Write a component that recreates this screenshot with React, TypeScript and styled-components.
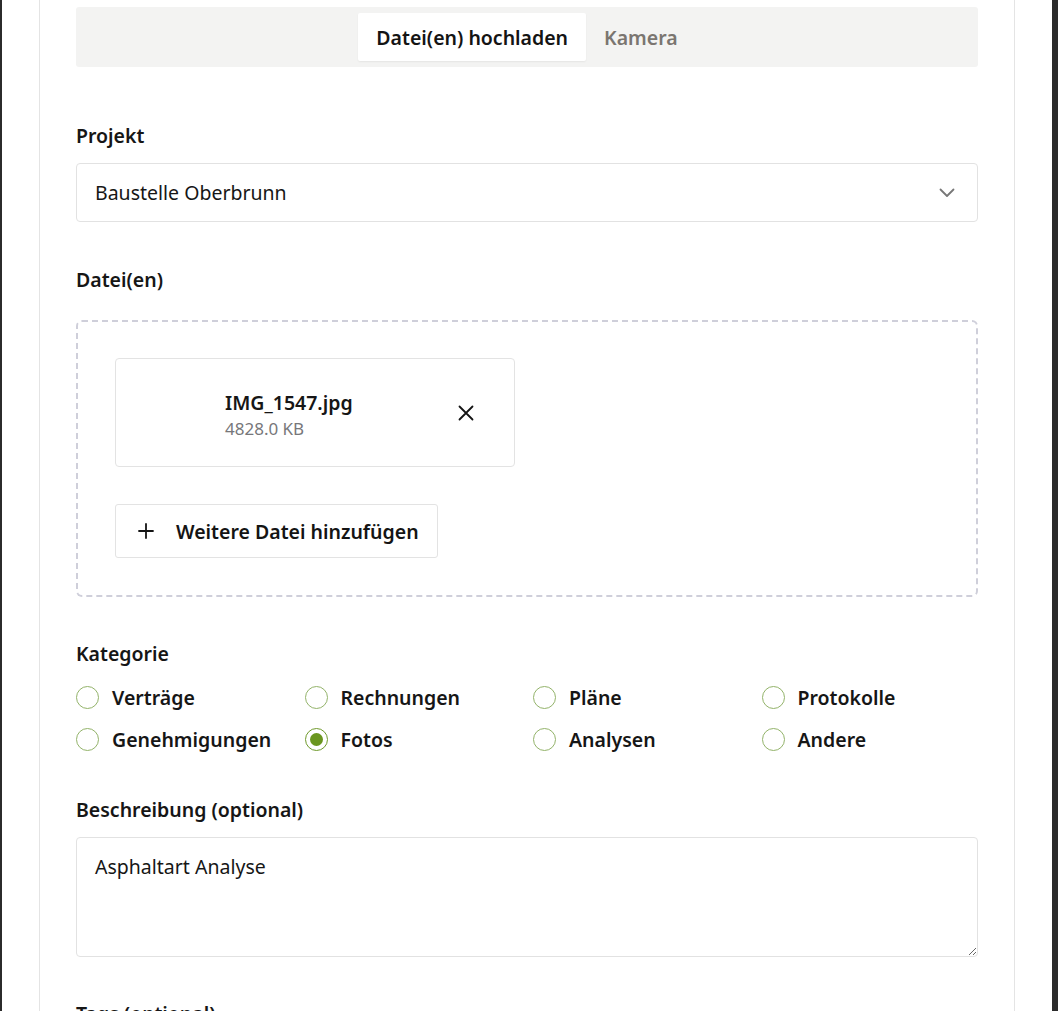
import React, { useState } from "react";
import styled, { createGlobalStyle } from "styled-components";

const GlobalStyle = createGlobalStyle`
  html, body { margin: 0; padding: 0; background: #ffffff; }
  body {
    font-family: "Noto Sans", "Open Sans", sans-serif;
    color: #161616;
    -webkit-font-smoothing: antialiased;
  }
  * { box-sizing: border-box; }
`;

const Frame = styled.div`
  min-height: 100vh;
  border-left: 2px solid #2b2b2b;
  border-right: 6px solid #2b2b2b;
  display: flex;
  justify-content: center;
`;

const Card = styled.main`
  width: 976px;
  border-left: 1px solid #e4e4e4;
  border-right: 1px solid #e4e4e4;
  padding: 7px 36px 40px;
  display: flex;
  flex-direction: column;
`;

const TabBar = styled.div`
  height: 60px;
  background: #f3f3f2;
  border-radius: 3px;
  padding: 6px;
  display: flex;
  justify-content: center;
`;

const Tab = styled.button<{ $active?: boolean }>`
  height: 48px;
  padding: 0 18px;
  border: none;
  border-radius: 2px;
  font-family: inherit;
  font-size: 19.5px;
  font-weight: 600;
  cursor: pointer;
  background: ${(p) => (p.$active ? "#ffffff" : "transparent")};
  color: ${(p) => (p.$active ? "#141414" : "#7a7570")};
  box-shadow: ${(p) => (p.$active ? "0 1px 2px rgba(0,0,0,0.06)" : "none")};
`;

const Field = styled.section<{ $top: number }>`
  margin-top: ${(p) => p.$top}px;
  display: flex;
  flex-direction: column;
`;

const Label = styled.div<{ $gap?: number }>`
  font-size: 19.5px;
  font-weight: 600;
  line-height: 26px;
  margin-bottom: ${(p) => p.$gap ?? 14}px;
`;

const SelectBox = styled.div`
  height: 59px;
  border: 1px solid #e2e2e2;
  border-radius: 4px;
  padding: 0 22px 0 18px;
  display: flex;
  align-items: center;
  justify-content: space-between;
  font-size: 19.5px;
`;

const DropZone = styled.div`
  border: 2px dashed #cfcfda;
  border-radius: 6px;
  padding: 36px 37px 37px;
  display: flex;
  flex-direction: column;
  align-items: flex-start;
  gap: 37px;
`;

const FileCard = styled.div`
  width: 400px;
  height: 109px;
  border: 1px solid #e3e3e3;
  border-radius: 4px;
  padding: 0 32px 0 16px;
  display: flex;
  align-items: center;
  gap: 13px;
`;

const Thumb = styled.div`
  width: 80px;
  height: 80px;
`;

const FileInfo = styled.div`
  flex: 1;
  display: flex;
  flex-direction: column;
  padding-top: 4px;
`;

const FileName = styled.div`
  font-size: 19.5px;
  font-weight: 600;
  line-height: 26px;
`;

const FileSize = styled.div`
  font-size: 17px;
  color: #77777a;
  line-height: 22px;
  margin-top: 2px;
`;

const IconButton = styled.button`
  width: 32px;
  height: 32px;
  border: none;
  background: transparent;
  padding: 0;
  display: flex;
  align-items: center;
  justify-content: center;
  cursor: pointer;
  color: #141414;
`;

const AddButton = styled.button`
  height: 54px;
  padding: 0 18px 0 22px;
  border: 1px solid #e3e3e3;
  border-radius: 3px;
  background: #ffffff;
  display: flex;
  align-items: center;
  gap: 22px;
  font-family: inherit;
  font-size: 19.5px;
  font-weight: 600;
  color: #141414;
  cursor: pointer;
`;

const RadioGrid = styled.div`
  display: grid;
  grid-template-columns: repeat(4, 1fr);
  column-gap: 12px;
  row-gap: 14px;
`;

const RadioItem = styled.label`
  display: flex;
  align-items: center;
  gap: 13px;
  height: 28px;
  font-size: 19.5px;
  font-weight: 600;
  cursor: pointer;
`;

const RadioCircle = styled.span<{ $checked?: boolean }>`
  width: 23px;
  height: 23px;
  border-radius: 50%;
  border: 1.5px solid ${(p) => (p.$checked ? "#6f9a2c" : "#93b36a")};
  display: flex;
  align-items: center;
  justify-content: center;
  flex-shrink: 0;
  &::after {
    content: "";
    width: 13px;
    height: 13px;
    border-radius: 50%;
    background: #6a961f;
    display: ${(p) => (p.$checked ? "block" : "none")};
  }
`;

const TextArea = styled.textarea`
  height: 120px;
  border: 1px solid #e2e2e2;
  border-radius: 4px;
  padding: 16px 18px;
  font-family: inherit;
  font-size: 19.5px;
  line-height: 26px;
  color: #161616;
  resize: vertical;
  outline: none;
`;

const TextInput = styled.input`
  height: 59px;
  border: 1px solid #e2e2e2;
  border-radius: 4px;
  padding: 0 18px;
  font-family: inherit;
  font-size: 19.5px;
  outline: none;
`;

const categories = [
  "Verträge",
  "Rechnungen",
  "Pläne",
  "Protokolle",
  "Genehmigungen",
  "Fotos",
  "Analysen",
  "Andere",
];

const Chevron = () => (
  <svg width="16" height="10" viewBox="0 0 16 10" fill="none">
    <path d="M1.5 1.5 8 8l6.5-6.5" stroke="#777" strokeWidth="1.8" strokeLinecap="round" strokeLinejoin="round" />
  </svg>
);

const CloseIcon = () => (
  <svg width="16" height="16" viewBox="0 0 16 16" fill="none">
    <path d="M1.5 1.5l13 13M14.5 1.5l-13 13" stroke="#141414" strokeWidth="1.8" strokeLinecap="round" />
  </svg>
);

const PlusIcon = () => (
  <svg width="16" height="16" viewBox="0 0 16 16" fill="none">
    <path d="M8 1v14M1 8h14" stroke="#141414" strokeWidth="1.8" strokeLinecap="round" />
  </svg>
);

export default function App() {
  const [cat, setCat] = useState("Fotos");
  const [desc, setDesc] = useState("Asphaltart Analyse");
  return (
    <>
      <GlobalStyle />
      <Frame>
        <Card>
          <TabBar>
            <Tab $active>Datei(en) hochladen</Tab>
            <Tab>Kamera</Tab>
          </TabBar>

          <Field $top={56}>
            <Label>Projekt</Label>
            <SelectBox>
              <span>Baustelle Oberbrunn</span>
              <Chevron />
            </SelectBox>
          </Field>

          <Field $top={45}>
            <Label $gap={27}>Datei(en)</Label>
            <DropZone>
              <FileCard>
                <Thumb />
                <FileInfo>
                  <FileName>IMG_1547.jpg</FileName>
                  <FileSize>4828.0 KB</FileSize>
                </FileInfo>
                <IconButton aria-label="Entfernen">
                  <CloseIcon />
                </IconButton>
              </FileCard>
              <AddButton>
                <PlusIcon />
                Weitere Datei hinzufügen
              </AddButton>
            </DropZone>
          </Field>

          <Field $top={44}>
            <Label $gap={16}>Kategorie</Label>
            <RadioGrid>
              {categories.map((c) => (
                <RadioItem key={c} onClick={() => setCat(c)}>
                  <RadioCircle $checked={cat === c} />
                  {c}
                </RadioItem>
              ))}
            </RadioGrid>
          </Field>

          <Field $top={44}>
            <Label $gap={14}>Beschreibung (optional)</Label>
            <TextArea value={desc} onChange={(e) => setDesc(e.target.value)} />
          </Field>

          <Field $top={44}>
            <Label $gap={14}>Tags (optional)</Label>
            <TextInput />
          </Field>
        </Card>
      </Frame>
    </>
  );
}
